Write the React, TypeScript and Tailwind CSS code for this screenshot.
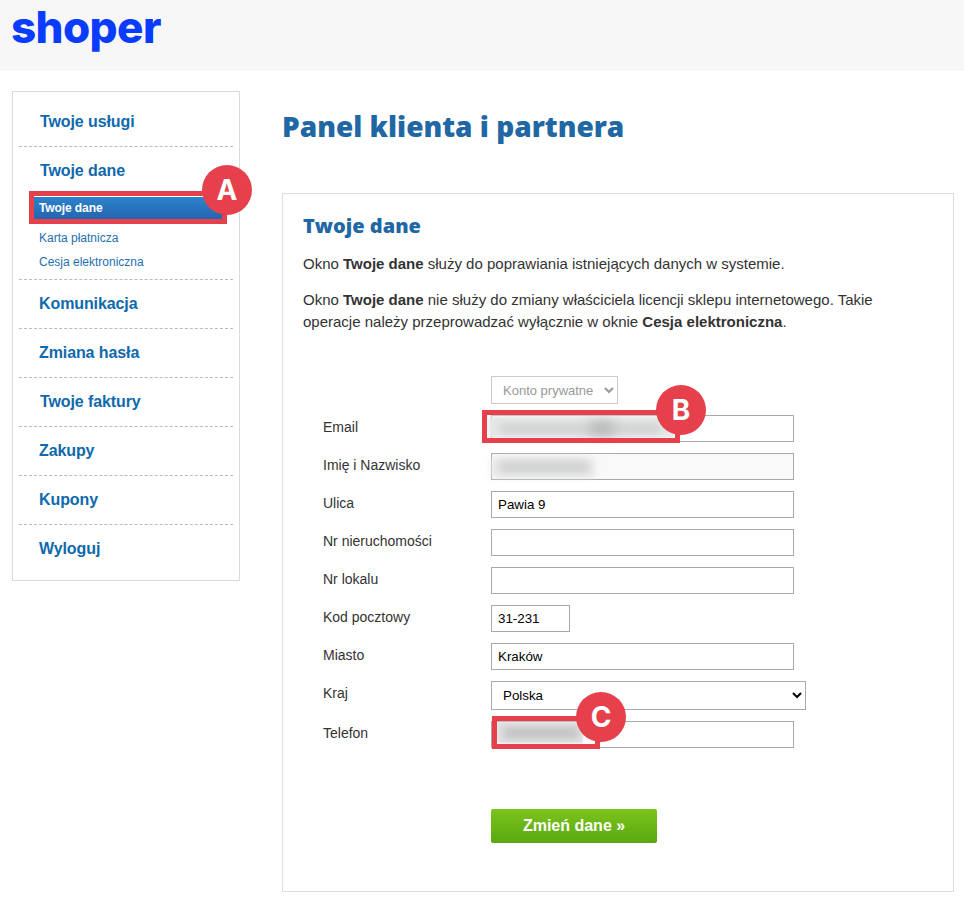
import React from 'react';

const arial = { fontFamily: '"Liberation Sans", Arial, sans-serif' };

const navAfter = [
  { label: 'Komunikacja', pad: 'pl-[20px]' },
  { label: 'Zmiana hasła', pad: 'pl-[20px]' },
  { label: 'Twoje faktury', pad: 'pl-[21px]' },
  { label: 'Zakupy', pad: 'pl-[20px]' },
  { label: 'Kupony', pad: 'pl-[20px]' },
];

const navCls = 'block text-[16px] font-bold leading-[48px] tracking-[-0.1px] text-[#0f69ad]';

const inputCls =
  'block h-[27px] border border-[#aaaaaa] px-[6px] text-[13.33px] text-black outline-none';

const Row: React.FC<{ label: string; children: React.ReactNode }> = ({ label, children }) => (
  <div className="flex h-[27px] items-start">
    <label className="w-[188px] pl-[20px] text-[14px] leading-[24px] text-[#333333]">{label}</label>
    {children}
  </div>
);

// red marker put over the screenshot
const Frame: React.FC<{ cls: string }> = ({ cls }) => (
  <div className={`pointer-events-none absolute border-[5px] border-[#e5404b] ${cls}`} />
);

const Badge: React.FC<{ letter: string; cls: string }> = ({ letter, cls }) => (
  <div
    className={`absolute flex h-[50px] w-[50px] items-center justify-center rounded-full bg-[#e5404b] text-[28px] font-bold text-white ${cls}`}
    style={{ fontFamily: 'Inter, sans-serif' }}
  >
    {letter}
  </div>
);

const Blur: React.FC<{ cls: string }> = ({ cls }) => <div className={`absolute ${cls}`} />;

const App: React.FC = () => {
  return (
    <div className="relative h-[903px] w-[964px] overflow-hidden bg-white" style={arial}>
      {/* Header */}
      <header className="h-[71px] bg-[#f7f7f7] pl-[11px]">
        <div
          className="text-[44px] font-extrabold leading-[55px] tracking-[-0.6px] text-[#0a3cff]"
          style={{ fontFamily: 'Inter, sans-serif' }}
        >
          shoper
        </div>
      </header>

      <div className="flex items-start pl-[12px] pt-[20px]">
        {/* Sidebar */}
        <aside className="h-[490px] w-[228px] border border-[#d5dddd] px-[6px]">
          <div className="h-[55px] border-b border-dashed border-[#bbbbbb] pt-[6px]">
            <a className={`${navCls} pl-[21px]`}>Twoje usługi</a>
          </div>
          <div className="h-[133px] border-b border-dashed border-[#bbbbbb]">
            <a className={`${navCls} pl-[21px]`}>Twoje dane</a>
            <a className="ml-[14px] mr-[10px] mt-[2px] block h-[23px] bg-gradient-to-b from-[#2d84cb] to-[#2462b0] pl-[6px] text-[12px] font-bold leading-[23px] tracking-[-0.1px] text-white">
              Twoje dane
            </a>
            <a className="mt-[6px] block pl-[20px] text-[12px] leading-[24px] text-[#1f6fb2]">Karta płatnicza</a>
            <a className="block pl-[20px] text-[12px] leading-[24px] text-[#1f6fb2]">Cesja elektroniczna</a>
          </div>
          {navAfter.map((item) => (
            <div key={item.label} className="h-[49px] border-b border-dashed border-[#bbbbbb]">
              <a className={`${navCls} ${item.pad}`}>{item.label}</a>
            </div>
          ))}
          <a className={`${navCls} pl-[20px]`}>Wyloguj</a>
        </aside>

        {/* Main */}
        <main className="ml-[42px] w-[672px]">
          <h1
            className="pt-[13px] text-[28px] font-extrabold leading-[44px] text-[#2067a3]"
            style={{ fontFamily: '"Open Sans", sans-serif' }}
          >
            Panel klienta i partnera
          </h1>

          <section className="mt-[45px] h-[699px] border border-[#dddddd] px-[20px]">
            <h2
              className="pt-[17px] text-[20px] font-extrabold leading-[30px] text-[#2067a3]"
              style={{ fontFamily: '"Open Sans", sans-serif' }}
            >
              Twoje dane
            </h2>
            <p className="mt-[12px] text-[15px] leading-[22px] text-[#333333]">
              Okno <b>Twoje dane</b> służy do poprawiania istniejących danych w systemie.
            </p>
            <p className="mt-[14px] text-[15px] leading-[22px] text-[#333333]">
              Okno <b>Twoje dane</b> nie służy do zmiany właściciela licencji sklepu internetowego. Takie operacje
              należy przeprowadzać wyłącznie w oknie <b>Cesja elektroniczna</b>.
            </p>

            <form className="mt-[43px] flex flex-col">
              <div className="pl-[188px]">
                <select
                  disabled
                  className="block h-[28px] w-[127px] border border-[#cccccc] bg-white pl-[7px] text-[13px] text-[#999999]"
                >
                  <option>Konto prywatne</option>
                </select>
              </div>
              <div className="mt-[11px] flex flex-col gap-[11px]">
                <Row label="Email">
                  <input className={`${inputCls} w-[303px] bg-white`} defaultValue="" />
                </Row>
                <Row label="Imię i Nazwisko">
                  <input className={`${inputCls} w-[303px] bg-[#f9f9f9]`} defaultValue="" />
                </Row>
                <Row label="Ulica">
                  <input className={`${inputCls} w-[303px] bg-white`} defaultValue="Pawia 9" />
                </Row>
                <Row label="Nr nieruchomości">
                  <input className={`${inputCls} w-[303px] bg-white`} defaultValue="" />
                </Row>
                <Row label="Nr lokalu">
                  <input className={`${inputCls} w-[303px] bg-white`} defaultValue="" />
                </Row>
                <Row label="Kod pocztowy">
                  <input className={`${inputCls} w-[79px] bg-white`} defaultValue="31-231" />
                </Row>
                <Row label="Miasto">
                  <input className={`${inputCls} w-[303px] bg-white`} defaultValue="Kraków" />
                </Row>
                <Row label="Kraj">
                  <select className="block h-[29px] w-[315px] border border-[#aaaaaa] bg-white pl-[7px] text-[13.33px] text-black">
                    <option>Polska</option>
                  </select>
                </Row>
                <div className="mt-[2px]">
                  <Row label="Telefon">
                    <input className={`${inputCls} w-[303px] bg-white`} defaultValue="" />
                  </Row>
                </div>
              </div>
              <div className="mt-[61px] pl-[188px]">
                <button
                  type="button"
                  className="h-[34px] w-[166px] rounded-[2px] bg-gradient-to-b from-[#7cc31c] to-[#59a90f] text-[16px] font-bold text-white"
                >
                  Zmień dane »
                </button>
              </div>
            </form>
          </section>
        </main>
      </div>

      {/* Blurred personal data */}
      <Blur cls="left-[488px] top-[416px] h-[22px] w-[188px] bg-[#e6e7e7] blur-[2px]" />
      <Blur cls="left-[500px] top-[424px] h-[9px] w-[160px] bg-[#cdcfcf] blur-[4px]" />
      <Blur cls="left-[590px] top-[422px] h-[13px] w-[24px] bg-[#b6b8b8] blur-[6px]" />
      <Blur cls="left-[491px] top-[458px] h-[19px] w-[104px] bg-[#e9e9e9] blur-[3px]" />
      <Blur cls="left-[500px] top-[461px] h-[12px] w-[88px] bg-[#cfd0d0] blur-[4px]" />
      <Blur cls="left-[497px] top-[722px] h-[21px] w-[86px] bg-[#e0e0e0] blur-[1px]" />
      <Blur cls="left-[504px] top-[727px] h-[12px] w-[74px] bg-[#c6c6c6] blur-[3px]" />

      {/* Annotations */}
      <Frame cls="left-[29px] top-[191px] h-[33px] w-[198px]" />
      <Frame cls="left-[482px] top-[410px] h-[33px] w-[198px]" />
      <Frame cls="left-[492px] top-[716px] h-[33px] w-[108px]" />
      <Badge letter="A" cls="left-[202px] top-[165px]" />
      <Badge letter="B" cls="left-[656px] top-[385px]" />
      <Badge letter="C" cls="left-[576px] top-[692px]" />
    </div>
  );
};

export default App;
